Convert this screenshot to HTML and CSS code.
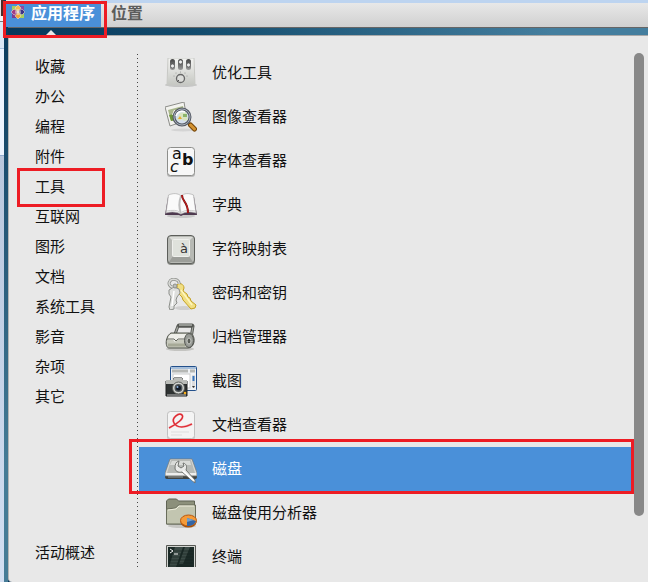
FILE: index.html
```
<!DOCTYPE html>
<html lang="zh-CN">
<head>
  <meta charset="UTF-8" />
  <meta name="viewport" content="width=device-width, initial-scale=1.0" />
  <title>应用程序</title>
  <link rel="stylesheet" href="styles.css">
</head>
<body>
  <div class="window-edge">
    <div class="edge-photo"></div>
    <div class="edge-bar"></div>
    <div class="edge-light"></div>
    <div class="edge-page"></div>
    <div class="edge-fade"></div>
  </div>

  <div class="desktop">
    <header class="topbar">
      <button type="button" class="menu-button active marked">
        <svg class="logo" viewBox="0 0 16 16" width="16" height="16">
          <path d="M2 2h5v5H2z" fill="#a8cf60"/>
          <path d="M9 2h5v5H9z" fill="#8d4aa0"/>
          <path d="M2 9h5v5H2z" fill="#7a3c92"/>
          <path d="M9 9h5v5H9z" fill="#a8cf60"/>
          <path d="M8 1l3 3-3 4-3-4z" fill="#f3bd52" stroke="#f2e9df" stroke-width=".5"/>
          <path d="M15 8l-3 3-4-3 4-3z" fill="#3f3488" stroke="#f2e9df" stroke-width=".5"/>
          <path d="M8 15l-3-3 3-4 3 4z" fill="#f0a63a" stroke="#f2e9df" stroke-width=".5"/>
          <path d="M1 8l3-3 4 3-4 3z" fill="#a33d83" stroke="#f2e9df" stroke-width=".5"/>
          <path d="M8 5v6M5 8h6" stroke="#f2e9df"/>
        </svg>
        应用程序
      </button>
      <button type="button" class="menu-button">位置</button>
    </header>

    <main class="menu-panel">
      <nav class="categories">
        <a href="#">收藏</a>
        <a href="#">办公</a>
        <a href="#">编程</a>
        <a href="#">附件</a>
        <a href="#" class="marked">工具</a>
        <a href="#">互联网</a>
        <a href="#">图形</a>
        <a href="#">文档</a>
        <a href="#">系统工具</a>
        <a href="#">影音</a>
        <a href="#">杂项</a>
        <a href="#">其它</a>
        <a href="#" class="overview">活动概述</a>
      </nav>
      <div class="divider"></div>

      <div class="apps">
        <a href="#" class="app">
          <svg class="icon" viewBox="0 0 32 32">
            <defs>
              <linearGradient id="silver" x1="0" y1="0" x2="0" y2="1"><stop offset="0" stop-color="#f5f5f3"/><stop offset="1" stop-color="#c5c7c2"/></linearGradient>
              <linearGradient id="dark" x1="0" y1="0" x2="0" y2="1"><stop offset="0" stop-color="#444"/><stop offset="1" stop-color="#999"/></linearGradient>
            </defs>
            <ellipse cx="16" cy="27" rx="16" ry="2" fill="#c4c4c4"/>
            <path d="M3 0h26l1 27H2z" fill="url(#silver)" stroke="#c8c9c5"/>
            <rect x="5" y="1" width="5" height="11" rx="2.500" fill="url(#dark)"/>
            <rect x="13" y="1" width="5" height="11" rx="2.500" fill="url(#dark)"/>
            <rect x="21" y="1" width="5" height="11" rx="2.500" fill="url(#dark)"/>
            <g fill="#eee" stroke="#444" stroke-width=".6"><circle cx="7.500" cy="8" r="2"/><circle cx="15.500" cy="4" r="2"/><circle cx="23.500" cy="7" r="2"/></g>
            <circle cx="15.500" cy="20.500" r="4" fill="#dcddda" stroke="#666" stroke-width="1.300"/>
            <path d="M12 24l2-2" stroke="#555"/>
            <g fill="#888"><circle cx="9" cy="18" r=".5"/><circle cx="11" cy="15" r=".5"/><circle cx="15.500" cy="14" r=".5"/><circle cx="20" cy="15" r=".5"/><circle cx="22" cy="18" r=".5"/></g>
          </svg>
          优化工具
        </a>
        <a href="#" class="app">
          <svg class="icon" viewBox="0 0 32 32">
            <ellipse cx="18" cy="28" rx="12" ry="1.500" fill="#d4d4d4"/>
            <path d="M0 5L19 0l3 18L5 24z" fill="#f3f3ef" stroke="#8c8d89"/>
            <path d="M3 8l15-4 2 12L6 19z" fill="#a9b78b"/>
            <path d="M4 13l5-1 2 6-5 1z" fill="#6e963b"/>
            <path d="M9 8l4 1 2-2 3 3-3 2-2 3-2-3-4 1z" fill="#fff"/>
            <circle cx="11" cy="10" r="1.500" fill="#e4822c"/>
            <path d="M23 21l3 3" stroke="#888" stroke-width="3"/>
            <path d="M25.500 23l4 4" stroke="#754507" stroke-width="5" stroke-linecap="round"/>
            <path d="M25.500 23l4 4" stroke="#d49332" stroke-width="3" stroke-linecap="round"/>
            <circle cx="17" cy="15" r="8" fill="#d4dfed" stroke="#565b65" stroke-width="3"/>
            <circle cx="17" cy="15" r="8" fill="none" stroke="#a7b0bc" stroke-width="1"/>
            <path d="M12 17l3-6 6-1 2 8-4 1-2-2-3 2z" fill="#d9e5c1"/>
            <path d="M13 17l2-3 2 3z" fill="#e7a832"/><path d="M18 12h4v3h-4z" fill="#8cb56b"/>
            <path d="M11 14c1-4 5-6 9-4" fill="none" stroke="#fff" stroke-width="1.500"/>
          </svg>
          图像查看器
        </a>
        <a href="#" class="app">
          <svg class="icon" viewBox="0 0 32 32">
            <rect x="2" y="3" width="28" height="28" rx="3" fill="#bbb"/>
            <rect x="2.500" y="1.500" width="27" height="28" rx="3" fill="#f7f7f7" stroke="#8d8e8b"/>
            <text class="glyph"><tspan x="7" y="13">a</tspan><tspan x="17" y="19" class="glyph-bold">b</tspan><tspan x="5" y="26" class="glyph-italic">c</tspan></text>
          </svg>
          字体查看器
        </a>
        <a href="#" class="app">
          <svg class="icon" viewBox="0 0 32 32">
            <ellipse cx="16" cy="26" rx="14" ry="2" fill="#c8c8c8"/>
            <path d="M3 7h26l3 18H18l-2 1-2-1H0z" fill="#4e394f"/>
            <path d="M3.500 5C8 3 13 3 16 6c3-3 8-3 12.500-1L31 23c-6-2-11-1-15 1-4-2-9-3-15-1z" fill="#fafafa" stroke="#aaa" stroke-width=".7"/>
            <path d="M16 6c-2 5-2 12 0 18" fill="none" stroke="#bfbfbf" stroke-width="2"/>
            <path d="M2 21c5-1 10-1 13 1M30 21c-5-1-10-1-13 1" fill="none" stroke="#ccc"/>
            <path d="M17 5c0 7 6 6 6 18" fill="none" stroke="#751010" stroke-width="2"/>
            <path d="M17 5c0 7 6 6 6 18" fill="none" stroke="#ca2020"/>
          </svg>
          字典
        </a>
        <a href="#" class="app">
          <svg class="icon" viewBox="0 0 32 32">
            <rect x="2" y="2" width="28" height="29" rx="4" fill="#8e908b"/>
            <rect x="2.500" y="1.500" width="27" height="28" rx="3.500" fill="#b7b9b4" stroke="#5c5e5a"/>
            <path d="M4 3l4 4h16l4-4z" fill="#dcddd9"/>
            <path d="M4 28l4-6h16l4 6z" fill="#9c9e99"/>
            <rect x="7.500" y="5.500" width="17" height="17" rx="1" fill="#dfe2dc" stroke="#eff0ed"/>
            <text x="15" y="19" class="glyph glyph-key">à</text>
          </svg>
          字符映射表
        </a>
        <a href="#" class="app">
          <svg class="icon" viewBox="0 0 32 32">
            <ellipse cx="19" cy="30" rx="9" ry="2" fill="#cfcfcf"/>
            <path d="M12 7c2-3 7-1 7 3l-1 3 4 3 1 3 2 1 1 3 5 4-1 3-4 1-8-9-1-3-5-5z" fill="#f1df83" stroke="#c5a122"/>
            <path d="M16 12l11 15" stroke="#fff6bd" stroke-width="1.500"/>
            <path d="M14 6a5 4 0 1 0-7 3" fill="none" stroke="#8d8f8b" stroke-width="3"/>
            <path d="M14 6a5 4 0 1 0-7 3" fill="none" stroke="#dadbd8" stroke-width="1.500"/>
            <path d="M4 12l5-3 5 2 1 4-3 4-1 3 1 3-3 3v3l-4 1-1-3 2-10-2-3z" fill="#dedfdd" stroke="#8d8f8b"/>
            <path d="M9 13L7 28" stroke="#fff" stroke-width="1.500"/>
            <circle cx="10" cy="8" r="2" fill="#bcbebb" stroke="#8c8e89"/>
          </svg>
          密码和密钥
        </a>
        <a href="#" class="app">
          <svg class="icon" viewBox="0 0 32 32">
            <ellipse cx="15" cy="27" rx="14" ry="2" fill="#c4c4c1"/>
            <path d="M9 15l4-11h15l-2 12" fill="none" stroke="#50534e" stroke-width="3" stroke-linejoin="round"/>
            <path d="M9 15l4-11h15l-2 12" fill="none" stroke="#a2a5a0" stroke-width="1.300"/>
            <path d="M14 3.500h13" stroke="#555753" stroke-width="4" stroke-linecap="round"/>
            <path d="M14 3h13" stroke="#aaaca7" stroke-width="1.500"/>
            <path d="M6 11h18c7 0 7 15-1 15H4c-4 0-4-12 2-15z" fill="#c7c9bd" stroke="#4f524b"/>
            <path d="M6 12h17c-3 2-4 4-4 6h-7l-2 2-2-2H3c0-3 1-5 3-6z" fill="#eeeee9"/>
            <path d="M2 17h7l2 2 2-2h6" fill="none" stroke="#666961"/>
            <path d="M3 23h17" stroke="#a6a997" stroke-width="3"/>
            <ellipse cx="24" cy="18.500" rx="4.500" ry="7" fill="#989b96" stroke="#555753"/>
            <ellipse cx="24" cy="19" rx="2" ry="3" fill="#5b5e58" stroke="#c8cac5"/>
          </svg>
          归档管理器
        </a>
        <a href="#" class="app">
          <svg class="icon" viewBox="0 0 32 32">
            <rect x="5.500" y=".500" width="26" height="24" rx="1" fill="#eff2f5" stroke="#23508b"/>
            <path d="M6 2h25" stroke="#5f8cc1" stroke-width="1"/>
            <path d="M7 5h16" stroke="#b6b8b5" stroke-width="3"/><path d="M25 5h5" stroke="#b6b8b5" stroke-width="3"/>
            <rect x="8" y="8" width="17" height="14" fill="#fff" stroke="#ccc"/>
            <rect x="27" y="9" width="3" height="13" fill="#ddd"/><path d="M28.500 10v5" stroke="#3775bd" stroke-width="2"/><path d="M27 20h3l-1.500 2z" fill="#333"/>
            <path d="M1 15h7l1-3h8l1 3h4v15H1z" fill="#2e3232" stroke="#202322"/>
            <path d="M1 14h7l1-2h8l1 2h4v4H1z" fill="#babcb8"/>
            <path d="M2 29h19" stroke="#bbb" stroke-width="1"/>
            <circle cx="13.500" cy="22" r="6" fill="#d2d4d1" stroke="#5b5d59"/>
            <circle cx="13.500" cy="22" r="4" fill="#4e5456"/><circle cx="13.500" cy="22" r="2.500" fill="#121a26"/>
            <circle cx="12.500" cy="21" r="1" fill="#91b6e4"/><circle cx="20" cy="27" r="1.300" fill="#f5ac19"/>
          </svg>
          截图
        </a>
        <a href="#" class="app">
          <svg class="icon" viewBox="0 0 32 32">
            <rect x="2" y="2" width="28" height="28" rx="3" fill="#c9c9c9"/>
            <rect x="2.500" y="1.500" width="27" height="27" rx="3" fill="#f4f4f4" stroke="#c1c1c1"/>
            <path d="M6 22h18M6 25h11" stroke="#dedede"/>
            <path d="M4 18C12 14 20 8 17 5S6 8 9 13s10 5 18 1" fill="none" stroke="#f08d91" stroke-width="2"/>
            <path d="M4 18C12 14 20 8 17 5S6 8 9 13s10 5 18 1" fill="none" stroke="#dc2831" stroke-width="1.200"/>
          </svg>
          文档查看器
        </a>
        <a href="#" class="app selected marked">
          <svg class="icon" viewBox="0 0 32 32">
            <path d="M0 19h32v3c0 3-1 3-3 3H3c-2 0-3 0-3-3z" fill="#424542"/>
            <path d="M5 5h22l5 14v3H0v-3z" fill="#d6d8d5" stroke="#747672" stroke-width=".7"/>
            <path d="M6 6h20l4 13H2z" fill="#b7bab6"/><path d="M7 7h18l1 4H5z" fill="#d9dbd8"/>
            <path d="M1 20h30" stroke="#f6f6f5" stroke-width="1.500"/>
            <path d="M3 23h15" stroke="#979996"/>
            <path d="M14 7l-1 5 3 2 3-2-1-3c4 1 4 4 3 7l9 10v3l-13-11c-4 1-7-1-7-4 0-4 1-6 4-7z" fill="#e9eae8" stroke="#727571"/>
            <path d="M18 17l11 10" stroke="#fff" stroke-width="1.500"/>
          </svg>
          磁盘
        </a>
        <a href="#" class="app">
          <svg class="icon" viewBox="0 0 32 32">
            <ellipse cx="17" cy="28" rx="14" ry="2" fill="#c6c6c3"/>
            <path d="M1.500 26V3l2-2h8l2 2h16v23z" fill="#8c907b" stroke="#5f6354"/>
            <path d="M1.500 26V11l9-1 3-3h17v19z" fill="#c2c5b0" stroke="#696d5b"/>
            <path d="M3 12l8-1 3-3h15" fill="none" stroke="#eeeedc"/>
            <ellipse cx="23.500" cy="24" rx="8" ry="5.500" fill="#a34e07"/>
            <ellipse cx="23.500" cy="22.500" rx="8" ry="5.500" fill="#f49b39" stroke="#b9570c"/>
            <path d="M22 20l9 3c-1 3-4 5-9 5z" fill="#3465a4"/><path d="M22 20l7 2-7 2z" fill="#709fcb"/>
          </svg>
          磁盘使用分析器
        </a>
        <a href="#" class="app">
          <svg class="icon" viewBox="0 0 32 32">
            <rect x="1" y="3" width="30" height="26" rx="1" fill="#555753"/>
            <rect x="2.500" y="4.500" width="27" height="24" fill="#1b2a27" stroke="#d2d4d0"/>
            <path d="M10 5h8l-7 20H4zM20 5h5l-7 17h-4z" fill="#52605b" opacity=".6"/>
            <path d="M4 9h24M4 12h24M4 15h24M4 18h24M4 21h24M4 24h24" stroke="#182320" stroke-width=".6"/>
            <path d="M5 7l3 2-3 2M9 12h4" fill="none" stroke="#f2f2f2"/>
          </svg>
          终端
        </a>
      </div>
      <div class="scrollbar"><div class="thumb"></div></div>
    </main>
  </div>
</body>
</html>
```
FILE: styles.css
```
* {
  box-sizing: border-box;
}

body {
  margin: 0;
  height: 100vh;
  display: flex;
  overflow: hidden;
  font-family: "Noto Sans CJK SC", "Liberation Sans", sans-serif;
  font-size: 15px;
  color: #111;
}

/* sliver of the window behind the desktop */
.window-edge {
  width: 4px;
  display: flex;
  flex-direction: column;
  background: #d5e1f3;
}

.edge-photo {
  height: 16px;
  background: linear-gradient(to right, #e8e8e8 1px, #492d2d 1px);
}

.edge-bar {
  height: 6px;
  background: #f4f6f9;
  border-bottom: 1px solid #777;
}

.edge-light {
  height: 27px;
  background: #dbe7f5;
  border-bottom: 1px solid #a9c3e2;
}

.edge-page {
  height: 107px;
  background: #edf4ff;
  border-bottom: 1px solid #91acd0;
}

.edge-fade {
  flex: 1;
  background: linear-gradient(#b9c7dd, #d3dff2);
}

.desktop {
  flex: 1;
  min-width: 0;
  display: flex;
  flex-direction: column;
  border-left: 4px solid #3f7795;
  border-image: linear-gradient(#07385b, #1d4f70 30%, #457b96 80%) 1;
  background: linear-gradient(to right, #07385b, #134c6d 30%, #447e9e 85%);
}

.topbar {
  height: 28px;
  display: flex;
  border-top: 3px solid #bdd4f0;
  border-bottom: 1px solid #666;
  background: linear-gradient(#e8e8e8, #d0d0d0);
}

.menu-button {
  display: flex;
  align-items: center;
  gap: 5px;
  padding: 0 8px 6px;
  border: none;
  background: none;
  font-family: inherit;
  font-size: 16px;
  font-weight: bold;
  line-height: 18px;
  color: #5c5c5c;
  white-space: nowrap;
  cursor: pointer;
}

.menu-button.active {
  position: relative;
  margin: -3px 2px 0 -2px;
  padding: 0 6px 4px 4px;
  border-top: 1px solid #e8e8e8;
  background: #4a90d9;
  color: #fff;
}

/* little arrow that ties the panel to its button */
.menu-button.active::before {
  content: "";
  position: absolute;
  top: 29px;
  left: 40px;
  border: 5px solid transparent;
  border-top: none;
  border-bottom-color: #e8e8e8;
}

.logo {
  flex: none;
}

.menu-panel {
  flex: 1;
  min-height: 0;
  margin-top: 7px;
  padding: 15px 4px 15px 0;
  display: flex;
  border-top: 1px solid #a9a9a9;
  border-left: 1px solid #b5b5b5;
  border-radius: 2px 0 0 4px;
  background: #e8e8e8;
}

.categories {
  width: 128px;
  display: flex;
  flex-direction: column;
}

.categories a {
  padding-left: 26px;
  line-height: 30px;
  color: inherit;
  text-decoration: none;
}

.categories .overview {
  margin-top: auto;
}

.divider {
  width: 1px;
  margin: 3px 1px 0 0;
  background: repeating-linear-gradient(#444 0 1px, transparent 1px 4px);
}

/* the list clips its overflow, the side padding leaves room for the frame */
.apps {
  flex: 1;
  min-width: 0;
  margin-left: -10px;
  padding: 0 2px 0 10px;
  overflow: hidden;
}

.app {
  height: 44px;
  padding: 0 0 4px 26px;
  display: flex;
  align-items: center;
  gap: 15px;
  color: inherit;
  text-decoration: none;
}

.app.selected {
  background: #4a90d9;
  color: #fff;
}

.icon {
  width: 32px;
  height: 32px;
  margin-top: 6px;
  flex: none;
}

.glyph {
  font-family: "DejaVu Sans", sans-serif;
  font-size: 16px;
  fill: #111;
}

.glyph-bold {
  font-weight: bold;
}

.glyph-italic {
  font-style: italic;
}

.glyph-key {
  font-size: 13px;
  fill: #333;
}

.scrollbar {
  width: 10px;
  padding-top: 2px;
}

.thumb {
  height: 90%;
  border-radius: 5px;
  background: #888;
}

/* red highlight frames */
.marked {
  position: relative;
}

.marked::after {
  content: "";
  position: absolute;
  border: 3px solid #ed1c24;
  pointer-events: none;
}

.menu-button.marked::after {
  inset: 0 -6px -11px -3px;
}

.categories .marked::after {
  inset: -3px 32px -6px 8px;
}

.app.marked::after {
  inset: -8px -2px -3px -10px;
}
```
